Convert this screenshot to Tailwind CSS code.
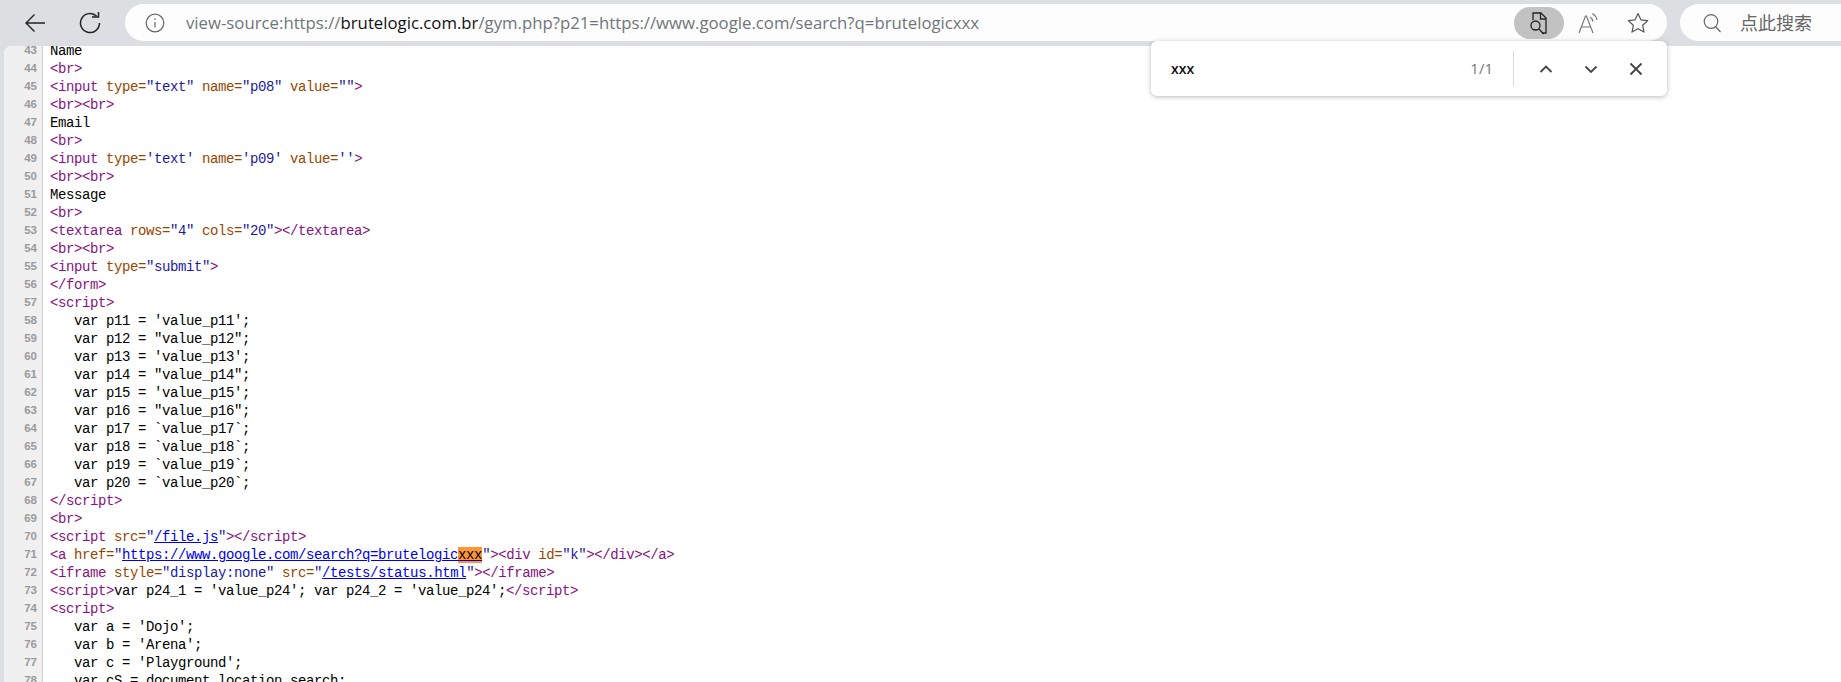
<!DOCTYPE html>
<html lang="en">
<head>
<meta charset="UTF-8" />
<title>view-source:https://brutelogic.com.br/gym.php</title>
<script src="https://cdn.jsdelivr.net/npm/@tailwindcss/browser@4"></script>
</head>
<body class="bg-white overflow-hidden">
<div class="relative h-[682px] w-[1841px] overflow-hidden bg-[#dcdee1] flex flex-col">

	<!-- Browser toolbar -->
	<header class="h-[46px] shrink-0 flex items-start pt-1 font-['Open_Sans',sans-serif]">
		<div class="w-[125px] h-[37px] shrink-0 flex items-center">
			<svg class="ml-[24px] w-[22px] h-[22px] text-[#222]" viewBox="0 0 22 22" fill="none" stroke="currentColor" stroke-width="1.4"><path d="M21 11H2M10.500 2.500L2 11l8.500 8.500"/></svg>
			<svg class="ml-[33px] w-[22px] h-[22px] text-[#222]" viewBox="0 0 22 22" fill="none" stroke="currentColor" stroke-width="1.500"><path d="M17.700 4.300A9.500 9.500 0 1 0 20.500 11"/><path d="M13 5h6.500V0"/></svg>
		</div>
		<div class="w-[1542px] h-[37px] shrink-0 bg-[#fdfdfd] rounded-full flex items-center">
			<svg class="ml-5 w-[20px] h-[20px] text-[#666]" viewBox="0 0 20 20" fill="none" stroke="currentColor" stroke-width="1.200"><circle cx="10" cy="10" r="8.800"/><path d="M10 9v5.500M10 5.500v1.500"/></svg>
			<p class="ml-[21px] text-[16.75px] text-[#70757a] whitespace-nowrap">view-source:https://<span class="text-[#111]">brutelogic.com.br</span>/gym.php?p21=https://www.google.com/search?q=brutelogicxxx</p>
			<div class="ml-auto w-[50px] h-[32px] rounded-full bg-[#c2c2c2] flex items-center justify-center">
				<svg class="w-[20px] h-[24px] text-[#222]" viewBox="0 0 20 24" fill="none" stroke="currentColor" stroke-width="1.300"><path d="M4 9V2h8l5 5v15h-4"/><path d="M11.500 2v6H17"/><circle cx="6.500" cy="14.500" r="4.500"/><path d="M10 18l4.500 5"/></svg>
			</div>
			<svg class="ml-[12px] w-[24px] h-[24px] text-[#777]" viewBox="0 0 24 24" fill="none" stroke="currentColor" stroke-width="1.200"><path d="M3 22L9.500 5h1L17 22M5.500 16h9.500"/><path d="M14 6c1.500 1 2.500 2.500 3 4.500M16.500 2.500c2.500 1.500 4 4 4.500 6.500"/></svg>
			<svg class="ml-[26px] w-[24px] h-[24px] text-[#555]" viewBox="0 0 24 24" fill="none" stroke="currentColor" stroke-width="1.200" stroke-linejoin="round"><path d="M12 2.500l2.900 6.300 6.800.8-5 4.700 1.300 6.800-6-3.400-6 3.400 1.300-6.800-5-4.700 6.800-.8z"/></svg>
			<div class="w-[17px]"></div>
		</div>
		<div class="ml-[13px] flex-1 h-[37px] bg-[#fdfdfd] rounded-l-full flex items-center">
			<svg class="ml-[22px] w-[20px] h-[20px] text-[#666]" viewBox="0 0 20 20" fill="none" stroke="currentColor" stroke-width="1.200"><circle cx="9" cy="8.500" r="6.800"/><path d="M13.500 13.500l5 5.500"/></svg>
			<span class="ml-[18px] text-[18px] text-[#666] font-['Noto_Sans_CJK_SC',sans-serif] whitespace-nowrap">点此搜索</span>
		</div>
	</header>

	<!-- View-source document -->
	<main class="flex-1 min-h-0 ml-1 bg-white rounded-tl-lg overflow-hidden flex">
		<div class="w-[39px] shrink-0 bg-[#f0f0f0] border-r border-[#cdcdcd] pr-[5px] text-right text-[11.500px] leading-[18px] font-['Liberation_Sans',sans-serif] font-bold text-[#9a9a9a]">
			<div class="-mt-[5px]">43</div><div>44</div><div>45</div><div>46</div><div>47</div><div>48</div><div>49</div><div>50</div><div>51</div><div>52</div>
			<div>53</div><div>54</div><div>55</div><div>56</div><div>57</div><div>58</div><div>59</div><div>60</div><div>61</div><div>62</div>
			<div>63</div><div>64</div><div>65</div><div>66</div><div>67</div><div>68</div><div>69</div><div>70</div><div>71</div><div>72</div>
			<div>73</div><div>74</div><div>75</div><div>76</div><div>77</div><div>78</div>
		</div>
		<pre class="pl-[7px] -mt-[4px] text-[14px] tracking-[-0.4px] leading-[18px] text-black font-['Liberation_Mono',monospace]"><div>Name</div><div class="text-[#881280]">&lt;br&gt;</div><div class="text-[#881280]">&lt;input <span class="text-[#994500]">type=</span><span class="text-[#1a1aa6]">"text"</span> <span class="text-[#994500]">name=</span><span class="text-[#1a1aa6]">"p08"</span> <span class="text-[#994500]">value=</span><span class="text-[#1a1aa6]">""</span>&gt;</div><div class="text-[#881280]">&lt;br&gt;&lt;br&gt;</div><div>Email</div><div class="text-[#881280]">&lt;br&gt;</div><div class="text-[#881280]">&lt;input <span class="text-[#994500]">type=</span><span class="text-[#1a1aa6]">'text'</span> <span class="text-[#994500]">name=</span><span class="text-[#1a1aa6]">'p09'</span> <span class="text-[#994500]">value=</span><span class="text-[#1a1aa6]">''</span>&gt;</div><div class="text-[#881280]">&lt;br&gt;&lt;br&gt;</div><div>Message</div><div class="text-[#881280]">&lt;br&gt;</div><div class="text-[#881280]">&lt;textarea <span class="text-[#994500]">rows=</span><span class="text-[#1a1aa6]">"4"</span> <span class="text-[#994500]">cols=</span><span class="text-[#1a1aa6]">"20"</span>&gt;&lt;/textarea&gt;</div><div class="text-[#881280]">&lt;br&gt;&lt;br&gt;</div><div class="text-[#881280]">&lt;input <span class="text-[#994500]">type=</span><span class="text-[#1a1aa6]">"submit"</span>&gt;</div><div class="text-[#881280]">&lt;/form&gt;</div><div class="text-[#881280]">&lt;script&gt;</div><div>   var p11 = 'value_p11';</div><div>   var p12 = "value_p12";</div><div>   var p13 = 'value_p13';</div><div>   var p14 = "value_p14";</div><div>   var p15 = 'value_p15';</div><div>   var p16 = "value_p16";</div><div>   var p17 = `value_p17`;</div><div>   var p18 = `value_p18`;</div><div>   var p19 = `value_p19`;</div><div>   var p20 = `value_p20`;</div><div class="text-[#881280]">&lt;/script&gt;</div><div class="text-[#881280]">&lt;br&gt;</div><div class="text-[#881280]">&lt;script <span class="text-[#994500]">src=</span><span class="text-[#1a1aa6]">"<a class="text-[#0000ee] underline">/file.js</a>"</span>&gt;&lt;/script&gt;</div><div class="text-[#881280]">&lt;a <span class="text-[#994500]">href=</span><span class="text-[#1a1aa6]">"<a class="text-[#0000ee] underline">https://www.google.com/search?q=brutelogic<span class="bg-[#ff9632] text-black">xxx</span></a>"</span>&gt;&lt;div <span class="text-[#994500]">id=</span><span class="text-[#1a1aa6]">"k"</span>&gt;&lt;/div&gt;&lt;/a&gt;</div><div class="text-[#881280]">&lt;iframe <span class="text-[#994500]">style=</span><span class="text-[#1a1aa6]">"display:none"</span> <span class="text-[#994500]">src=</span><span class="text-[#1a1aa6]">"<a class="text-[#0000ee] underline">/tests/status.html</a>"</span>&gt;&lt;/iframe&gt;</div><div class="text-[#881280]">&lt;script&gt;<span class="text-black">var p24_1 = 'value_p24'; var p24_2 = 'value_p24';</span>&lt;/script&gt;</div><div class="text-[#881280]">&lt;script&gt;</div><div>   var a = 'Dojo';</div><div>   var b = 'Arena';</div><div>   var c = 'Playground';</div><div>   var cS = document.location.search;</div></pre>
	</main>

	<!-- Find in page popup -->
	<div class="absolute left-[1151px] top-[41px] w-[516px] h-[55px] bg-white rounded-md shadow-[0_1px_5px_rgba(0,0,0,0.28)] flex items-center font-['Open_Sans',sans-serif]">
		<span class="ml-5 text-[14px] font-semibold text-[#111]">xxx</span>
		<span class="ml-auto text-[15px] text-[#777]">1/1</span>
		<div class="ml-5 w-px h-[35px] bg-[#d8d8d8]"></div>
		<svg class="ml-[25px] w-[14px] h-[14px] text-[#444]" viewBox="0 0 14 14" fill="none" stroke="currentColor" stroke-width="1.800"><path d="M1.500 10L7 4.500 12.500 10"/></svg>
		<svg class="ml-[31px] w-[14px] h-[14px] text-[#444]" viewBox="0 0 14 14" fill="none" stroke="currentColor" stroke-width="1.800"><path d="M1.500 4.500L7 10l5.500-5.500"/></svg>
		<svg class="ml-[31px] w-[14px] h-[14px] text-[#444]" viewBox="0 0 14 14" fill="none" stroke="currentColor" stroke-width="1.800"><path d="M1.500 1.500l11 11M12.500 1.500l-11 11"/></svg>
		<div class="w-[24px]"></div>
	</div>
</div>
</body>
</html>
